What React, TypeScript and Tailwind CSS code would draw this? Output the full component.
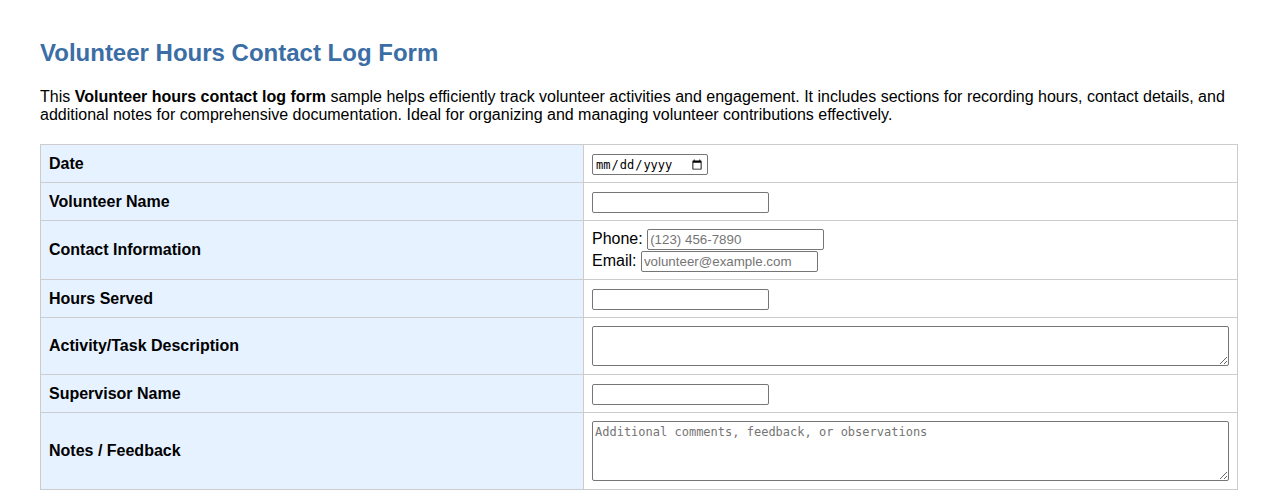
const rows: { label: string; kind: string; height: string }[] = [
    {label: "Date", kind: "date", height: "h-[38px]"},
    {label: "Volunteer Name", kind: "text", height: "h-[38px]"},
    {label: "Contact Information", kind: "contact", height: "h-[59px]"},
    {label: "Hours Served", kind: "text", height: "h-[38px]"},
    {label: "Activity/Task Description", kind: "area", height: "h-[57px]"},
    {label: "Supervisor Name", kind: "text", height: "h-[38px]"},
    {label: "Notes / Feedback", kind: "notes", height: "h-[77px]"},
];

const inputCls =
    "w-[177px] h-[21px] border border-[#767676] rounded-[2px] px-[2px] text-[13.33px] font-['Liberation_Sans',Arial,sans-serif] text-black placeholder:text-[#757575] bg-white align-middle";

function Field({kind}: { kind: string }) {
    if (kind === "date") {
        return (
            <input
                type="date"
                className="w-[116px] h-[21px] border border-[#767676] rounded-[2px] px-[2px] text-[12px] font-['DejaVu_Sans_Mono',monospace] text-black bg-white"
            />
        );
    }
    if (kind === "contact") {
        return (
            <div className="text-[16px] leading-[21px]">
                <div>
                    Phone: <input className={inputCls} placeholder="(123) 456-7890"/>
                </div>
                <div>
                    Email: <input className={inputCls} placeholder="volunteer@example.com"/>
                </div>
            </div>
        );
    }
    if (kind === "area") {
        return (
            <textarea
                className="block w-full h-[40px] border border-[#767676] rounded-[2px] p-[2px] text-[13px] font-['DejaVu_Sans_Mono',monospace] bg-white"
            />
        );
    }
    if (kind === "notes") {
        return (
            <textarea
                placeholder="Additional comments, feedback, or observations"
                className="block w-full h-[60px] border border-[#767676] rounded-[2px] px-[2px] pt-[3px] text-[12px] leading-[15px] font-['DejaVu_Sans_Mono',monospace] placeholder:text-[#757575] bg-white"
            />
        );
    }
    return <input className={inputCls}/>;
}

export default function App() {
    return (
        <div className="bg-white min-h-[501px] px-[40px] pt-[39px] font-['Liberation_Sans',Arial,sans-serif] text-black">
            <h1 className="text-[24px] leading-[28px] font-bold text-[#3a6ea5]">
                Volunteer Hours Contact Log Form
            </h1>
            <p className="mt-[21px] text-[16px] leading-[18px]">
                This <b>Volunteer hours contact log form</b> sample helps efficiently track volunteer activities and
                engagement. It includes sections for recording hours, contact details, and additional notes for
                comprehensive documentation. Ideal for organizing and managing volunteer contributions effectively.
            </p>
            <table className="mt-[20px] w-full border-collapse border border-[#cccccc]">
                <tbody>
                {rows.map((r) => (
                    <tr key={r.label} className={r.height}>
                        <td className="w-[543px] bg-[#e6f2ff] border border-[#cccccc] px-[8px] py-0 text-[16px] font-bold align-middle">
                            {r.label}
                        </td>
                        <td className="border border-[#cccccc] px-[8px] py-0 align-middle">
                            <Field kind={r.kind}/>
                        </td>
                    </tr>
                ))}
                </tbody>
            </table>
        </div>
    );
}
